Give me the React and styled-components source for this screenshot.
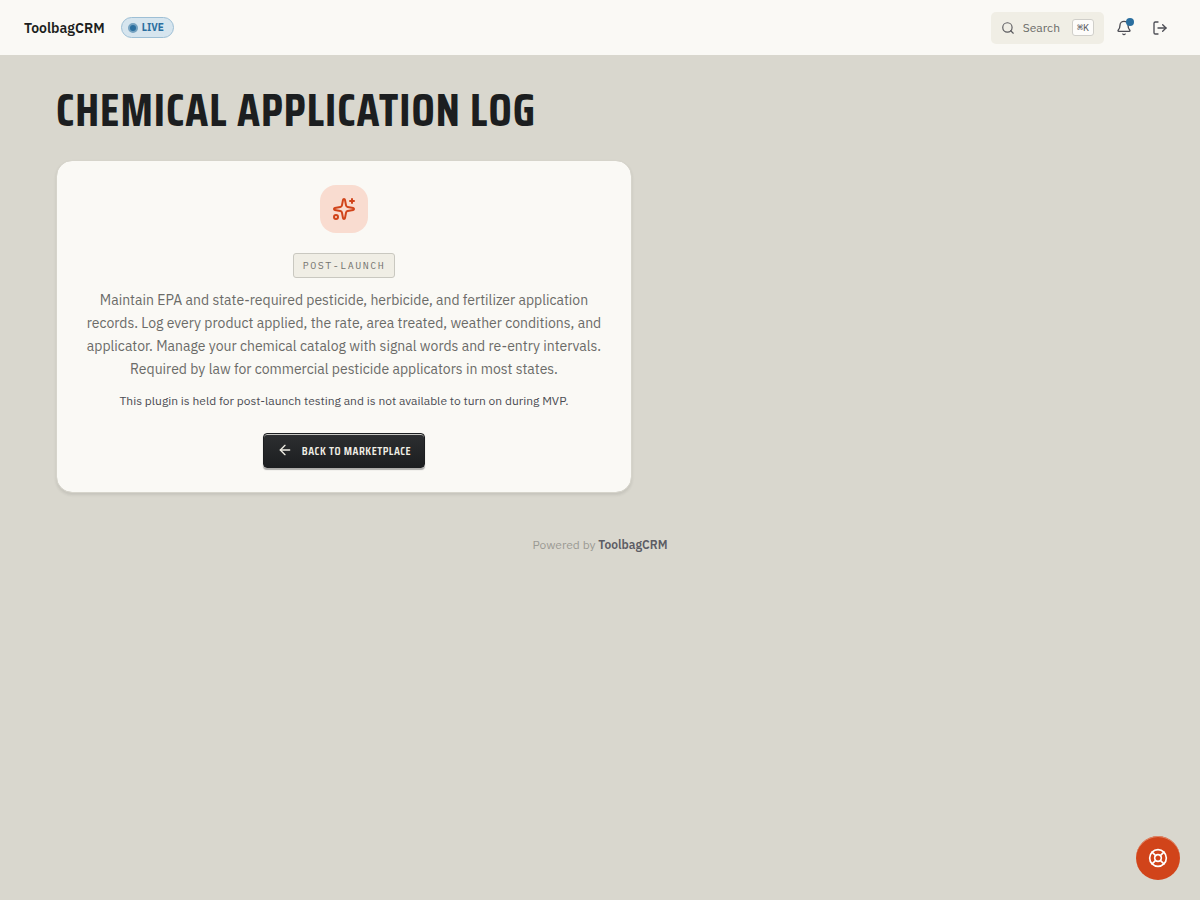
import React from "react";
import styled, { createGlobalStyle } from "styled-components";
import {
  ArrowLeft,
  Bell,
  LifeBuoy,
  LogOut,
  Search,
  Sparkles,
} from "lucide-react";

const display = `"Saira Extra Condensed", "Saira Condensed", "Liberation Sans Narrow", "Roboto Condensed", sans-serif`;
const mono = `"IBM Plex Mono", "Liberation Mono", monospace`;

const GlobalStyle = createGlobalStyle`
  * {
    box-sizing: border-box;
  }

  body {
    margin: 0;
    background: #d9d7ce;
    color: #1c1e20;
    font-family: "IBM Plex Sans", Roboto, sans-serif;
    font-size: 14px;
  }

  h1,
  p {
    margin: 0;
  }

  button {
    font-family: inherit;
    cursor: pointer;
  }
`;

const Header = styled.header`
  display: flex;
  align-items: center;
  justify-content: space-between;
  height: 55px;
  padding: 0 24px;
  background: #faf9f5;
`;

const Group = styled.div`
  display: flex;
  align-items: center;
  gap: ${(props) => props.$gap};
`;

const Brand = styled.a`
  color: inherit;
  font-size: 14px;
  font-weight: 600;
  line-height: 20px;
  text-decoration: none;
`;

const LiveBadge = styled.span`
  display: inline-flex;
  align-items: center;
  gap: 4px;
  height: 21px;
  padding: 0 9px 0 6px;
  border: 1px solid #9dbfd5;
  border-radius: 11px;
  background: #d6e5ee;
  color: #2b6f9f;
  font-size: 10px;
  font-weight: 700;
`;

const LiveDot = styled.span`
  width: 10px;
  height: 10px;
  border: 2px solid #76a3c1;
  border-radius: 50%;
  background: #2b6f9f;
`;

const SearchButton = styled.button`
  display: flex;
  align-items: center;
  gap: 8px;
  height: 32px;
  padding: 0 10px;
  border: 0;
  border-radius: 5px;
  background: #f0eee5;
  color: #6b6b68;
  font-size: 12px;

  svg {
    color: #5c5c60;
  }
`;

const Shortcut = styled.kbd`
  margin-left: 4px;
  padding: 0 4px;
  border: 1px solid #d0cfca;
  border-radius: 3px;
  background: #fdfcfa;
  color: #55565a;
  font-family: ${mono};
  font-size: 10px;
  line-height: 15px;
`;

const IconButton = styled.button`
  position: relative;
  display: grid;
  place-items: center;
  width: 32px;
  height: 32px;
  padding: 0;
  border: 0;
  background: none;
  color: #4c4d54;
`;

const Unread = styled.span`
  position: absolute;
  top: 6px;
  right: 6px;
  width: 8px;
  height: 8px;
  border-radius: 50%;
  background: #2b6f9f;
`;

const Main = styled.main`
  padding: 31px 56px 0;
`;

const Title = styled.h1`
  font-family: ${display};
  font-size: 46px;
  font-weight: 700;
  letter-spacing: 1px;
  line-height: 48px;
  text-transform: uppercase;
`;

const Card = styled.section`
  display: flex;
  flex-direction: column;
  align-items: center;
  max-width: 576px;
  margin-top: 26px;
  padding: 24px;
  border: 1px solid #d6d4cb;
  border-radius: 16px;
  background: #faf9f5;
  background-clip: padding-box;
  box-shadow: 0 2px 3px rgba(28, 30, 32, 0.1);
  text-align: center;
`;

const Tile = styled.div`
  display: grid;
  place-items: center;
  width: 48px;
  height: 48px;
  border-radius: 16px;
  background: #f9dcd0;
  color: #d1441a;
`;

const StatusTag = styled.span`
  margin-top: 20px;
  padding: 0 9px;
  border: 1px solid #c9c8c0;
  border-radius: 3px;
  background: #f0eee5;
  color: #73736f;
  font-family: ${mono};
  font-size: 10px;
  letter-spacing: 1.5px;
  line-height: 23px;
  text-transform: uppercase;
`;

const Description = styled.p`
  margin-top: 11px;
  color: #6b6b68;
  font-size: 14px;
  line-height: 23px;
`;

const Note = styled.p`
  margin-top: 10px;
  color: #4c4d54;
  font-size: 12px;
  line-height: 20px;
`;

const BackButton = styled.button`
  display: flex;
  align-items: center;
  gap: 9px;
  height: 35px;
  margin-top: 22px;
  padding: 0 13px 1px;
  border: 1px solid #1c1e20;
  border-radius: 4px;
  background: linear-gradient(#2d2f31, #1c1e20);
  box-shadow:
    inset 0 1px 0 #c8c8c4,
    0 2px 1px rgba(28, 30, 32, 0.35);
  color: #f0eee5;

  span {
    font-family: ${display};
    font-size: 12px;
    font-weight: 600;
    letter-spacing: 0.5px;
    text-transform: uppercase;
  }
`;

const Footer = styled.footer`
  margin-top: 42px;
  color: #9b9a94;
  font-size: 12px;
  line-height: 20px;
  text-align: center;

  strong {
    color: #5c5c64;
    font-weight: 600;
  }
`;

const HelpButton = styled.button`
  position: fixed;
  right: 20px;
  bottom: 20px;
  display: grid;
  place-items: center;
  width: 44px;
  height: 44px;
  padding: 0;
  border: 0;
  border-radius: 50%;
  background: #d1441a;
  box-shadow: inset 0 1px 0 #e08a6c;
  color: #fff;
`;

const App = () => {
  return (
    <>
      <GlobalStyle />
      <Header>
        <Group $gap="16px">
          <Brand href="#">ToolbagCRM</Brand>
          <LiveBadge>
            <LiveDot />
            LIVE
          </LiveBadge>
        </Group>
        <Group $gap="4px">
          <SearchButton type="button">
            <Search size={14} strokeWidth={2} />
            Search
            <Shortcut>⌘K</Shortcut>
          </SearchButton>
          <IconButton type="button" aria-label="Notifications">
            <Bell size={16} strokeWidth={2} />
            <Unread />
          </IconButton>
          <IconButton type="button" aria-label="Sign out">
            <LogOut size={16} strokeWidth={2} />
          </IconButton>
        </Group>
      </Header>
      <Main>
        <Title>Chemical Application Log</Title>
        <Card>
          <Tile>
            <Sparkles size={24} strokeWidth={2} />
          </Tile>
          <StatusTag>Post-launch</StatusTag>
          <Description>
            Maintain EPA and state-required pesticide, herbicide, and fertilizer
            application records. Log every product applied, the rate, area
            treated, weather conditions, and applicator. Manage your chemical
            catalog with signal words and re-entry intervals. Required by law
            for commercial pesticide applicators in most states.
          </Description>
          <Note>
            This plugin is held for post-launch testing and is not available to
            turn on during MVP.
          </Note>
          <BackButton type="button">
            <ArrowLeft size={16} strokeWidth={2} />
            <span>Back to Marketplace</span>
          </BackButton>
        </Card>
        <Footer>
          Powered by <strong>ToolbagCRM</strong>
        </Footer>
      </Main>
      <HelpButton type="button" aria-label="Help">
        <LifeBuoy size={20} strokeWidth={2} />
      </HelpButton>
    </>
  );
};

export default App;
